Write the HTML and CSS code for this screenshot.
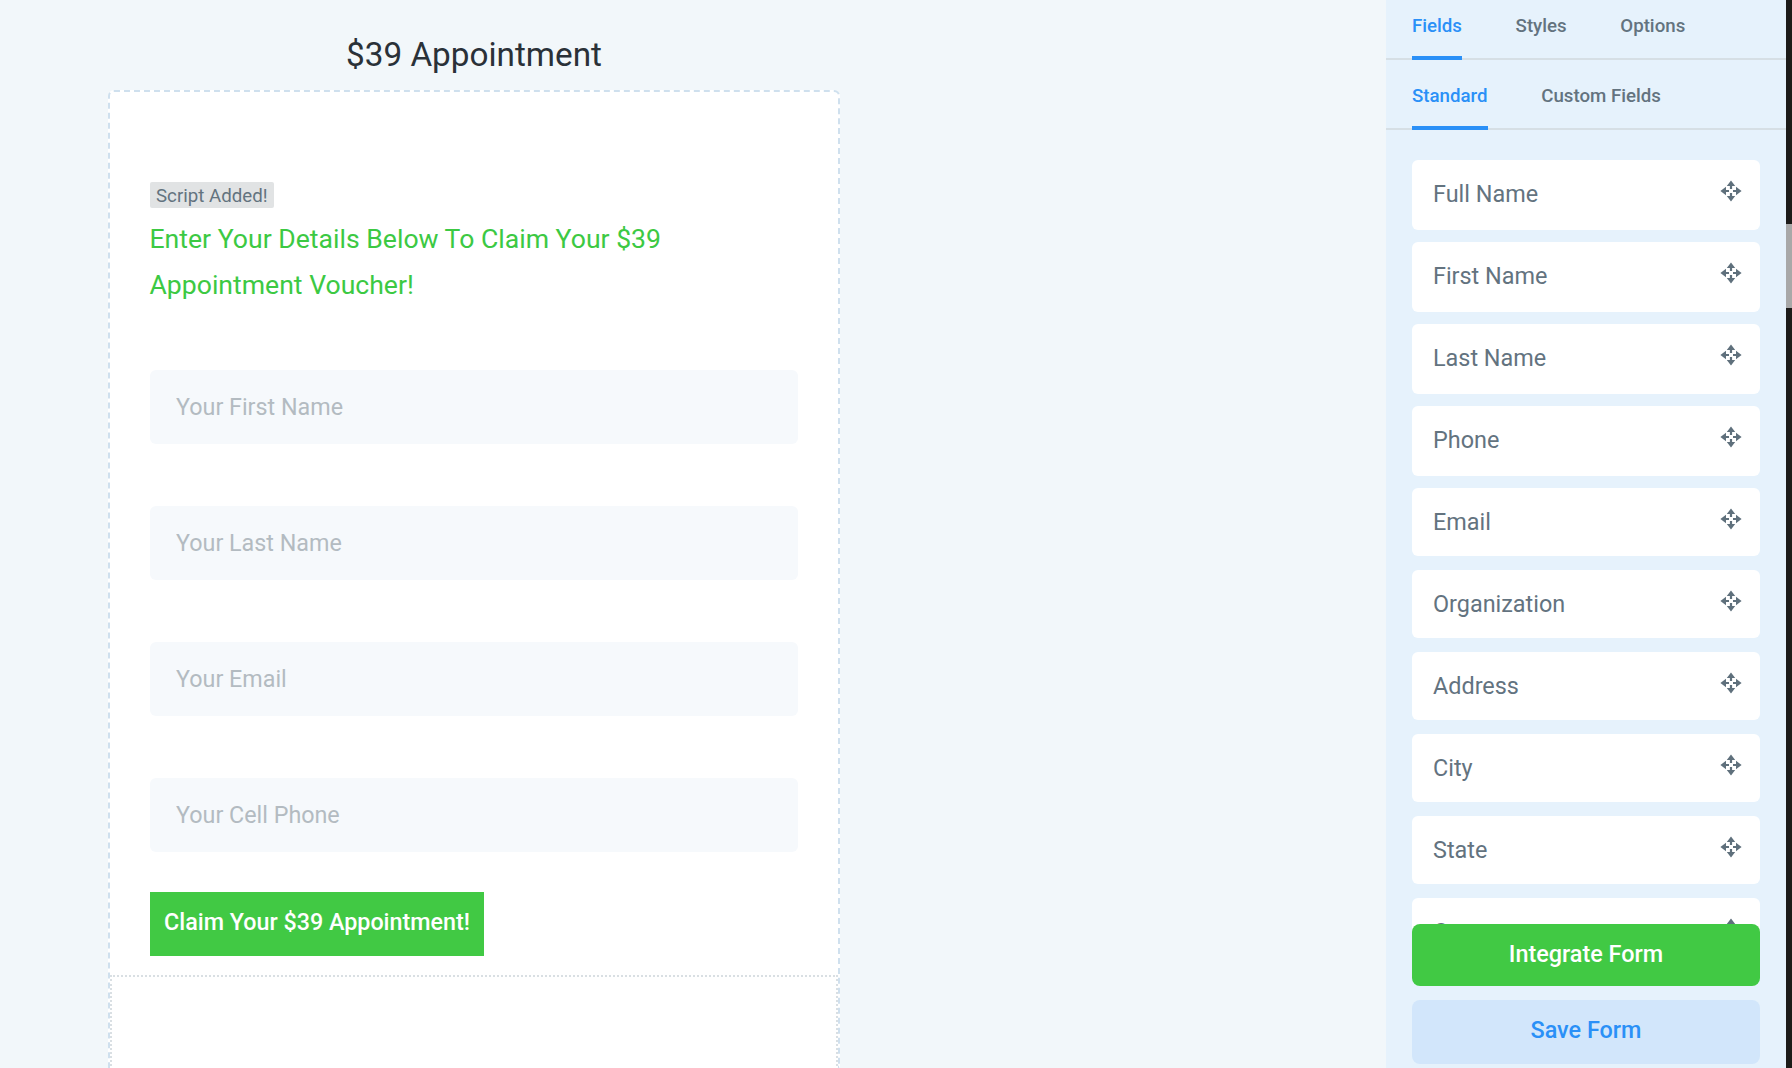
FILE: index.html
```html
<!DOCTYPE html>
<html lang="en">
<head>
    <meta charset="UTF-8">
    <title>$39 Appointment</title>
    <link rel="stylesheet" href="styles.css">
</head>
<body>
    <svg class="icon-defs" width="0" height="0">
        <symbol id="move" viewBox="0 0 22 22">
            <path d="M11 4v5M11 13v5M4 11h5M13 11h5" fill="none" stroke="currentColor" stroke-width="2.2"/>
            <path d="M6.8 6 11 .4 15.2 6zM6.8 16l4.2 5.6 4.2-5.6zM6 6.8.4 11 6 15.2zM16 6.8l5.6 4.2-5.6 4.2z" fill="currentColor"/>
        </symbol>
    </svg>

    <main class="editor">
        <div class="form-column">
            <h1 class="form-title">$39 Appointment</h1>
            <div class="form-box">
                <div class="form-section">
                    <span class="script-tag">Script Added!</span>
                    <h2 class="form-heading">Enter Your Details Below To Claim Your $39 Appointment Voucher!</h2>
                    <div class="form-inputs">
                        <input class="form-input" type="text" placeholder="Your First Name">
                        <input class="form-input" type="text" placeholder="Your Last Name">
                        <input class="form-input" type="text" placeholder="Your Email">
                        <input class="form-input" type="text" placeholder="Your Cell Phone">
                    </div>
                    <button class="claim-btn">Claim Your $39 Appointment!</button>
                </div>
                <div class="form-section-empty"></div>
            </div>
        </div>
    </main>

    <aside class="sidebar">
        <nav class="tabs">
            <a class="tab active">Fields</a>
            <a class="tab">Styles</a>
            <a class="tab">Options</a>
        </nav>
        <nav class="tabs sub-tabs">
            <a class="tab active">Standard</a>
            <a class="tab">Custom Fields</a>
        </nav>
        <ul class="field-list">
            <li class="field-item">Full Name <svg class="move-icon"><use href="#move"/></svg></li>
            <li class="field-item">First Name <svg class="move-icon"><use href="#move"/></svg></li>
            <li class="field-item">Last Name <svg class="move-icon"><use href="#move"/></svg></li>
            <li class="field-item">Phone <svg class="move-icon"><use href="#move"/></svg></li>
            <li class="field-item">Email <svg class="move-icon"><use href="#move"/></svg></li>
            <li class="field-item">Organization <svg class="move-icon"><use href="#move"/></svg></li>
            <li class="field-item">Address <svg class="move-icon"><use href="#move"/></svg></li>
            <li class="field-item">City <svg class="move-icon"><use href="#move"/></svg></li>
            <li class="field-item">State <svg class="move-icon"><use href="#move"/></svg></li>
            <li class="field-item">Country <svg class="move-icon"><use href="#move"/></svg></li>
        </ul>
        <div class="sidebar-actions">
            <button class="action-btn integrate">Integrate Form</button>
            <button class="action-btn save">Save Form</button>
        </div>
    </aside>

    <div class="page-scroll">
        <div class="page-scroll-thumb"></div>
    </div>
</body>
</html>
```

FILE: styles.css
```css
* {
    box-sizing: border-box;
}

body {
    margin: 0;
    height: 1068px;
    overflow: hidden;
    display: flex;
    font-family: Roboto, sans-serif;
    background: #f2f7fa;
}

.icon-defs {
    position: absolute;
}

.editor {
    flex: 1;
    padding-left: 108px;
}

.form-column {
    width: 732px;
}

.form-title {
    margin: 0;
    height: 90px;
    padding-top: 33px;
    font-size: 33.3px;
    line-height: 44px;
    font-weight: 400;
    text-align: center;
    color: #2a3138;
}

.form-box {
    height: 978px;
    background: #fff;
    border: 2px dashed #cfe0ee;
    border-bottom: 0;
    border-radius: 6px 6px 0 0;
}

.form-section {
    height: 885px;
    padding: 90px 40px 0;
    border-bottom: 2px dotted #d9dfe3;
}

.script-tag {
    display: block;
    width: 124px;
    height: 26px;
    padding-left: 6px;
    font-size: 18.7px;
    line-height: 29px;
    color: #63737f;
    background: #e1e3e4;
    border-radius: 2px;
}

.form-heading {
    margin: 8px 0 0 -0.5px;
    font-size: 26.6px;
    line-height: 46px;
    font-weight: 400;
    color: #3cc943;
}

.form-inputs {
    margin-top: 62px;
    display: flex;
    flex-direction: column;
    gap: 62px;
}

.form-input {
    display: block;
    width: 648px;
    height: 74px;
    padding: 0 26px 1px;
    border: 0;
    border-radius: 6px;
    background: #f6f9fc;
    font-family: Roboto, sans-serif;
    font-size: 23.3px;
}

.form-input::placeholder {
    color: #b3bbc1;
}

.claim-btn {
    display: block;
    margin-top: 40px;
    width: 334px;
    height: 64px;
    padding: 0 0 4px;
    border: 0;
    background: #41c944;
    color: #fff;
    font-family: Roboto, sans-serif;
    font-size: 23.3px;
    font-weight: 500;
}

.form-section-empty {
    height: 91px;
    margin: 2px 0 0;
    border-left: 2px dotted #d9dfe3;
    border-right: 2px dotted #d9dfe3;
}

.sidebar {
    position: relative;
    width: 400px;
    height: 1068px;
    overflow: hidden;
    background: #e6f2fc;
}

.tabs {
    display: flex;
    gap: 53.6px;
    height: 60px;
    padding-left: 26px;
    border-bottom: 2px solid #d6dfe5;
}

.sub-tabs {
    height: 70px;
    padding-top: 10px;
}

.tab {
    height: 60px;
    font-size: 18.7px;
    font-weight: 500;
    line-height: 52px;
    color: #63737f;
}

.tab.active {
    color: #2a90f7;
    border-bottom: 4px solid #2a90f7;
}

.field-list {
    margin: 0;
    padding: 30px 26px 0;
    list-style: none;
}

.field-item {
    display: flex;
    justify-content: space-between;
    height: 70px;
    margin-bottom: 12px;
    padding: 0 18px 0 21px;
    background: #fff;
    border-radius: 6px;
    font-size: 23.4px;
    line-height: 68px;
    color: #63737f;
}

.field-item:nth-child(n+5) {
    height: 68px;
    margin-bottom: 14px;
}

.move-icon {
    width: 22px;
    height: 22px;
    margin-top: 20px;
    color: #5f707c;
}

.sidebar-actions {
    position: absolute;
    left: 26px;
    top: 924px;
    width: 348px;
    display: flex;
    flex-direction: column;
    gap: 14px;
}

.action-btn {
    height: 62px;
    padding: 0 0 2px;
    border: 0;
    border-radius: 8px;
    font-family: Roboto, sans-serif;
    font-size: 23.4px;
    font-weight: 500;
}

.integrate {
    background: #41c944;
    color: #fff;
}

.save {
    height: 64px;
    padding-bottom: 4px;
    background: #d2e6fb;
    color: #2a90f7;
}

.page-scroll {
    width: 6px;
    height: 1068px;
    background: #1c1b19;
}

.page-scroll-thumb {
    height: 84px;
    margin-top: 224px;
    background: #a8a8a8;
}
```
